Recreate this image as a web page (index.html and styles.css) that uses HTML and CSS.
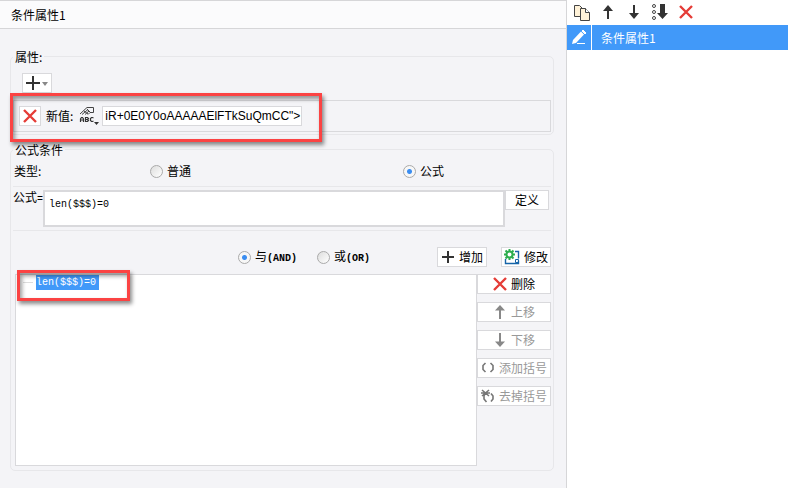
FILE: index.html
```html
<!DOCTYPE html>
<html lang="zh-CN">
<head>
<meta charset="utf-8">
<title>条件属性</title>
<link rel="stylesheet" href="styles.css">
</head>
<body>
<div class="app">
  <main class="editor">
    <h1 class="title">条件属性1</h1>
    <div class="body">
      <fieldset class="group attributes">
        <legend>属性:</legend>
        <button class="btn add" type="button" aria-label="添加属性">
          <svg width="24" height="16" viewBox="0 0 24 16"><path d="M1 8h14M8 1v14" stroke="#333" stroke-width="2"/><path d="M17 7h6l-3 4z" fill="#888"/></svg>
        </button>
        <div class="value-row">
          <button class="btn square" type="button" aria-label="删除属性">
            <svg width="14" height="14" viewBox="0 0 14 14"><path d="M1 1l12 12M13 1L1 13" stroke="#e53c37" stroke-width="2.4"/></svg>
          </button>
          <label class="value-label" for="value">新值:</label>
          <svg class="type-icon" width="20" height="20" viewBox="0 0 20 20"><path d="M8 1.500h6.500v5H11M8 1.500L1 8M3 8.500l6-5M6 8.500l4-3.500M9 8.500l2-2M8 3l4 4M5 5l4 3" fill="none" stroke="#444"/><path d="M1.500 16v-3l1-1.500h1l1 1.500v3M1.500 14h3M6.500 11.500v4h2l1-1-1-1 1-1-1-1zM6.500 13.500h2M14.500 12l-1-.5h-1l-1 1v2l1 1h1l1-.5" fill="none" stroke="#333" stroke-width="1.200"/><path d="M15 16h5l-2.500 3z" fill="#333"/></svg>
          <input class="value" id="value" type="text" value="iR+0E0Y0oAAAAAElFTkSuQmCC&quot;&gt;">
          <div class="mark mark-value"></div>
        </div>
      </fieldset>

      <fieldset class="group condition">
        <legend>公式条件</legend>
        <div class="type-row">
          <span>类型:</span>
          <label class="choice"><input type="radio" name="type">普通</label>
          <label class="choice"><input type="radio" name="type" checked>公式</label>
        </div>
        <div class="formula-row">
          <label class="formula-label" for="formula">公式<span class="mono">=</span></label>
          <textarea class="formula mono" id="formula">len($$$)=0</textarea>
          <button class="btn define" type="button">定义</button>
        </div>
        <div class="join-row">
          <div class="joins">
            <label class="choice"><input type="radio" name="join" checked><span>与<span class="mono strong">(AND)</span></span></label>
            <label class="choice"><input type="radio" name="join"><span>或<span class="mono strong">(OR)</span></span></label>
          </div>
          <button class="btn" type="button"><svg width="14" height="14" viewBox="0 0 14 14"><path d="M1 7h12M7 1v12" stroke="#333" stroke-width="2"/></svg>增加</button>
          <button class="btn modify" type="button"><svg width="16" height="16" viewBox="0 0 16 16"><path d="M11 2.500h3.500v7M1.500 10v4.500h13v-3M4 14.500h6" fill="none" stroke="#1664a8" stroke-width="1.400"/><path d="M11.500 10.500h3v3h-3z" fill="none" stroke="#1664a8"/><path d="M5.500 0v11M0 5.500h11M1.500 1.500l8 8M9.500 1.500l-8 8" stroke="#2dae4e" stroke-width="2"/><circle cx="5.500" cy="5.500" r="3" fill="#fff" stroke="#2dae4e" stroke-width="2"/></svg>修改</button>
        </div>
        <div class="list-row">
          <div class="list">
            <div class="node mono"><span class="picked">len($$$)=0</span></div>
            <div class="mark mark-node"></div>
          </div>
          <div class="actions">
            <button class="btn" type="button"><svg width="14" height="14" viewBox="0 0 14 14"><path d="M1 1l12 12M13 1L1 13" stroke="#e53c37" stroke-width="2.4"/></svg>删除</button>
            <button class="btn" type="button" disabled><svg width="14" height="14" viewBox="0 0 14 14"><path d="M7 14V3" stroke="#888" stroke-width="2"/><path d="M7 0L2 5.500h10z" fill="#888"/></svg>上移</button>
            <button class="btn" type="button" disabled><svg width="14" height="14" viewBox="0 0 14 14"><path d="M7 0v11" stroke="#888" stroke-width="2"/><path d="M7 14L2 8.500h10z" fill="#888"/></svg>下移</button>
            <button class="btn" type="button" disabled><svg width="14" height="14" viewBox="0 0 14 14"><path d="M4.500 2L2 4.500v4L4.500 11M9.500 2L12 4.500v4L9.500 11" fill="none" stroke="#777" stroke-width="1.600"/></svg>添加括号</button>
            <button class="btn" type="button" disabled><svg width="14" height="14" viewBox="0 0 14 14"><path d="M1 1l7 6M8 1L1 7M0 4h9M4.500 4L3 7v3l2.500 3M10 4.500l2 2.500v3l-2 2.500" fill="none" stroke="#777" stroke-width="1.600"/></svg>去掉括号</button>
          </div>
        </div>
      </fieldset>
    </div>
  </main>

  <aside class="side">
    <div class="tools">
      <button type="button" aria-label="复制"><svg width="18" height="18" viewBox="0 0 18 18"><path d="M1.500 1.500h5l3 3v8h-8z" fill="#fff2d8" stroke="#444"/><path d="M7.500 4.500h5l4 4v8h-9z" fill="#fff2d8" stroke="#444"/><path d="M12.500 4.500v4h4" fill="#fff" stroke="#444"/></svg></button>
      <button type="button" aria-label="上移"><svg width="18" height="18" viewBox="0 0 18 18"><path d="M9 15V5" stroke="#333" stroke-width="2"/><path d="M9 1L4 7h10z" fill="#333"/></svg></button>
      <button type="button" aria-label="下移"><svg width="18" height="18" viewBox="0 0 18 18"><path d="M9 1v11" stroke="#333" stroke-width="2"/><path d="M9 15L4 9h10z" fill="#333"/></svg></button>
      <button type="button" aria-label="排序"><svg width="18" height="18" viewBox="0 0 18 18"><g fill="none" stroke="#444"><circle cx="3" cy="2" r="1.500"/><circle cx="3" cy="8" r="1.500"/><circle cx="3" cy="14" r="1.500"/></g><path d="M9 0h5v9h3l-5.500 6L6 9h3z" fill="#333"/></svg></button>
      <button type="button" aria-label="删除"><svg width="18" height="18" viewBox="0 0 18 18"><path d="M3 2l12 12M15 2L3 14" stroke="#e53c37" stroke-width="2.400"/></svg></button>
    </div>
    <div class="entry">
      <span class="entry-icon"><svg width="16" height="16" viewBox="0 0 16 16"><path d="M1 14l1-4 8-8.500 3 3L5 13z" fill="#fff"/><path d="M11 1l1-1 3 3-1 1zM6 13.500h8" fill="#fff" stroke="#fff"/></svg></span>
      <span class="entry-name">条件属性1</span>
    </div>
  </aside>
</div>
</body>
</html>
```
FILE: styles.css
```css
* { box-sizing: border-box; }

body {
  margin: 0;
  background: #fff;
  color: #000;
  font: 12px/14px "Noto Sans CJK SC", sans-serif;
}

button, input, textarea { margin: 0; font: inherit; color: inherit; }
svg { display: block; flex: none; }
.mono { font-family: "Liberation Mono", monospace; font-size: 10px; }
.strong { font-weight: 700; }

.app {
  display: grid;
  grid-template-columns: minmax(0, 567fr) minmax(0, 221fr);
  min-height: 100vh;
}

.editor { background: #f4f4f7; border-right: 1px solid #d6d6d8; }

.title {
  margin: 0;
  height: 29px;
  padding-left: 11px;
  border-top: 1px solid #d6d6d8;
  border-bottom: 1px solid #d6d6d8;
  background: #fbfbfc;
  font-size: 12px;
  font-weight: 400;
  line-height: 28px;
}

.body { padding: 20px 12px 16px 10px; }

.group {
  min-width: 0;
  margin: 0;
  border: 1px solid #e7e7ea;
  border-radius: 5px;
}
.group legend { padding: 0 2px; height: 14px; line-height: 16px; }
.attributes { padding: 10px 2px 2px; }
.condition { margin-top: 7px; padding: 0 2px 4px; }

.btn {
  display: flex;
  align-items: center;
  justify-content: center;
  gap: 4px;
  height: 20px;
  padding: 0 2px;
  border: 1px solid #d9d9dc;
  border-radius: 0;
  background: #fff;
  line-height: 18px;
  white-space: nowrap;
}
.btn:disabled { color: #999; }
.add { width: 30px; margin-left: 9px; }
.square { width: 22px; }

.value-row {
  position: relative;
  display: flex;
  align-items: center;
  height: 32px;
  margin-top: 7px;
  padding-left: 5px;
  border: 1px solid #d9d9dc;
}
.value-label { margin: 0 6px 0 5px; }
.type-icon { margin-right: 3px; }
.value {
  width: 200px;
  height: 20px;
  padding: 0 0 0 2px;
  border: 1px solid #d9d9dc;
  background: #fff;
  font: 12px "Liberation Sans", sans-serif;
}

.mark {
  position: absolute;
  border: 3px solid #fb4343;
  box-shadow: 2px 3px 4px rgba(0, 0, 0, .45), inset 2px 3px 4px rgba(0, 0, 0, .4);
  pointer-events: none;
}
.mark-value { left: -4px; top: -8px; width: 312px; height: 49px; }
.mark-node { left: 1px; top: -5px; width: 113px; height: 31px; }

.type-row {
  display: grid;
  grid-template-columns: 136fr 253fr 148fr;
  align-items: center;
  height: 31px;
  padding-left: 1px;
  border-bottom: 1px solid #e7e7ea;
}

.choice { display: flex; align-items: center; gap: 4px; }
.choice input {
  appearance: none;
  width: 13px;
  height: 13px;
  border: 1px solid #aaa;
  border-radius: 50%;
  background: linear-gradient(135deg, #ddd, #fff);
}
.choice input:checked { background: radial-gradient(circle, #3b8df0 2px, #f7f7f7 3px); }

.formula-row {
  display: flex;
  align-items: flex-start;
  padding: 3px 2px 3px 0;
  border-bottom: 1px solid #e7e7ea;
}
.formula-label { width: 30px; white-space: nowrap; }
.formula {
  flex: 1;
  min-width: 0;
  height: 37px;
  padding: 6px 4px;
  border: 2px solid #d9d9dc;
  border-radius: 0;
  background: #fff;
  line-height: 14px;
  resize: none;
}
.define { width: 44px; }

.join-row { display: flex; gap: 14px; padding: 16px 0 7px; }
.join-row .btn { width: 50px; }
.joins {
  display: flex;
  flex: 1;
  justify-content: flex-end;
  gap: 20px;
  padding-right: 53px;
}

.list-row { display: flex; padding-left: 2px; }
.list {
  position: relative;
  flex: 1;
  height: 192px;
  border: 1px solid #d9d9dc;
  background: #fff;
}
.node { display: flex; align-items: center; gap: 3px; padding-left: 7px; }
.node::before { content: ""; width: 10px; border-top: 1px solid #ddd; }
.picked { padding-right: 3px; background: #4199f9; color: #fff; line-height: 15px; }
.actions { display: flex; flex-direction: column; gap: 8px; width: 74px; }

.tools { display: flex; align-items: center; gap: 8px; height: 25px; padding-left: 6px; }
.tools button { padding: 0; border: 0; background: none; }

.entry {
  display: flex;
  align-items: stretch;
  height: 25px;
  background: #4199f9;
  color: #fff;
  line-height: 25px;
}
.entry-icon { display: grid; place-items: center; width: 25px; border-right: 1px solid #fff; }
.entry-name { padding-left: 9px; }
```
